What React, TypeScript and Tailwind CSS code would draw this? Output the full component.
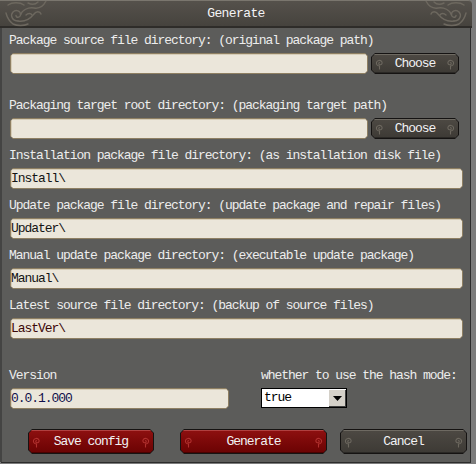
import React from "react";

const Curl = ({ color, flip }: { color: string; flip?: boolean }) => (
  <svg width="9" height="12" viewBox="0 0 9 12" className={flip ? "-scale-x-100" : ""}>
    <path
      d="M4.5 11 L4.5 8 C2 8 1 6 1.6 4.2 C2.3 2.2 5.2 1.8 6.6 3.4 C7.8 4.9 6.8 7 5 6.8 C3.6 6.6 3.4 5 4.4 4.6"
      fill="none"
      stroke={color}
      strokeWidth="1.1"
      strokeLinecap="round"
    />
  </svg>
);

const Btn = ({
  label,
  variant,
  className,
}: {
  label: string;
  variant: "red" | "gray";
  className: string;
}) => (
  <div
    className={
      "bg-[#151312] p-[1px] [clip-path:polygon(4px_0,calc(100%-4px)_0,100%_4px,100%_calc(100%-4px),calc(100%-4px)_100%,4px_100%,0_calc(100%-4px),0_4px)] " +
      className
    }
  >
    <div
      className={
        variant === "red"
          ? "h-full w-full flex items-center justify-between px-[3px] bg-gradient-to-b from-[#8e1010] to-[#6b0303] shadow-[inset_0_1px_0_#b04040,inset_0_-1px_0_#4a0000] [clip-path:polygon(3px_0,calc(100%-3px)_0,100%_3px,100%_calc(100%-3px),calc(100%-3px)_100%,3px_100%,0_calc(100%-3px),0_3px)]"
          : "h-full w-full flex items-center justify-between px-[3px] bg-gradient-to-b from-[#4d4943] to-[#3d3a35] shadow-[inset_0_1px_0_#6e6a62,inset_0_-1px_0_#2a2825] [clip-path:polygon(3px_0,calc(100%-3px)_0,100%_3px,100%_calc(100%-3px),calc(100%-3px)_100%,3px_100%,0_calc(100%-3px),0_3px)]"
      }
    >
      <Curl color={variant === "red" ? "#b0302e" : "#6c675e"} />
      <span className="text-[#f2f2f4]">{label}</span>
      <Curl color={variant === "red" ? "#b0302e" : "#6c675e"} flip />
    </div>
  </div>
);

const Field = ({
  value,
  color,
  className,
}: {
  value?: string;
  color?: string;
  className: string;
}) => (
  <div
    className={
      "h-[21px] bg-[#8e7f62] p-[1px] [clip-path:polygon(3px_0,calc(100%-3px)_0,100%_3px,100%_calc(100%-3px),calc(100%-3px)_100%,3px_100%,0_calc(100%-3px),0_3px)] " +
      className
    }
  >
    <div className="h-full w-full bg-[#ebe6da] shadow-[inset_1px_1px_0_#d6cdb8] flex items-center [clip-path:polygon(2px_0,calc(100%-2px)_0,100%_2px,100%_calc(100%-2px),calc(100%-2px)_100%,2px_100%,0_calc(100%-2px),0_2px)]">
      <span style={{ color: color || "#141414" }}>{value}</span>
    </div>
  </div>
);

const Label = ({ text }: { text: string }) => (
  <div className="h-[16px] leading-[16px] text-[#ededed] whitespace-nowrap -ml-[1px]">{text}</div>
);

const Ornament = ({ flip }: { flip?: boolean }) => (
  <svg
    width="46"
    height="27"
    viewBox="0 0 46 27"
    className={flip ? "-scale-x-100" : ""}
  >
    <g fill="none" stroke="#6d685f" strokeWidth="1.4" strokeLinecap="round">
      <path d="M4 4 C8 1 16 1 20 4" />
      <path d="M14 20 C8 20 6 14 9 11 C12 8 17 10 16.5 14 C16 17 12 17 12 14.5" />
      <path d="M16.5 14 C18 9 24 6 30 7 C36 8 40 4 42 0" />
      <path d="M14 20 C20 21 26 18 30 13 C32 10 36 10 37 13" />
      <path d="M22 14 C24 12 27 12 28 14" />
      <path d="M2 12 C3 16 5 20 9 23 C13 25 20 25 24 23" />
      <path d="M24 2 C28 4 32 3 34 1" />
    </g>
  </svg>
);

export default function App() {
  return (
    <div className="w-[476px] h-[464px] bg-[#7c7c7c] font-['Liberation_Mono','DejaVu_Sans_Mono',monospace] text-[13px] tracking-[-1.05px] overflow-hidden">
      <div className="w-[470px] h-[462px] bg-[#5c5c5a] border-l-2 border-[#444443] shadow-[1px_1px_0_#2c2c2c] flex flex-col">
        {/* Title bar */}
        <div className="relative h-[28px] -ml-[2px] w-[472px] bg-gradient-to-b from-[#55514b] to-[#46433e] border-t border-[#7a766e] border-b-2 border-b-[#2e2c29] rounded-tr-[4px] flex items-center justify-center">
          <div className="absolute left-[4px] top-0">
            <Ornament />
          </div>
          <div className="absolute right-[4px] top-0">
            <Ornament flip />
          </div>
          <span className="relative text-[#f4f4f6] tracking-[-0.6px]">Generate</span>
        </div>

        <div className="flex flex-col pl-[8px] pr-[7px] pt-[5px]">
          <Label text="Package source file directory: (original package path)" />
          <div className="mt-[4px] flex pr-[4px]">
            <Field className="flex-1" />
            <Btn label="Choose" variant="gray" className="ml-[3px] w-[88px] h-[21px]" />
          </div>

          <div className="mt-[24px]">
            <Label text="Packaging target root directory: (packaging target path)" />
          </div>
          <div className="mt-[4px] flex pr-[4px]">
            <Field className="flex-1" />
            <Btn label="Choose" variant="gray" className="ml-[3px] w-[88px] h-[21px]" />
          </div>

          <div className="mt-[9px]">
            <Label text="Installation package file directory: (as installation disk file)" />
          </div>
          <Field className="mt-[4px]" value="Install\" />

          <div className="mt-[9px]">
            <Label text="Update package file directory: (update package and repair files)" />
          </div>
          <Field className="mt-[4px]" value="Updater\" />

          <div className="mt-[9px]">
            <Label text="Manual update package directory: (executable update package)" />
          </div>
          <Field className="mt-[4px]" value="Manual\" />

          <div className="mt-[9px]">
            <Label text="Latest source file directory: (backup of source files)" />
          </div>
          <Field className="mt-[4px]" value="LastVer\" color="#3c0808" />

          <div className="mt-[29px] flex">
            <div className="w-[219px] flex flex-col">
              <Label text="Version" />
              <Field className="mt-[4px]" value="0.0.1.000" color="#10104a" />
            </div>
            <div className="ml-[33px] flex flex-col">
              <Label text="whether to use the hash mode:" />
              <div className="mt-[4px] ml-[-1px] w-[86px] h-[20px] bg-white border border-black flex">
                <span className="flex-1 leading-[18px] pl-[2px] text-black">true</span>
                <div className="w-[18px] h-full bg-[#d4d0c8] border-t border-l border-t-white border-l-white shadow-[inset_-1px_-1px_0_#404040] flex items-center justify-center">
                  <svg width="9" height="5" viewBox="0 0 9 5">
                    <path d="M0 0 H9 L4.5 5 Z" fill="#000" />
                  </svg>
                </div>
              </div>
            </div>
          </div>
        </div>

        <div className="mt-[20px] flex ml-[26px]">
          <Btn label="Save config" variant="red" className="w-[126px] h-[25px]" />
          <Btn label="Generate" variant="red" className="ml-[26px] w-[147px] h-[25px]" />
          <Btn label="Cancel" variant="gray" className="ml-[13px] w-[127px] h-[25px]" />
        </div>
      </div>
    </div>
  );
}
